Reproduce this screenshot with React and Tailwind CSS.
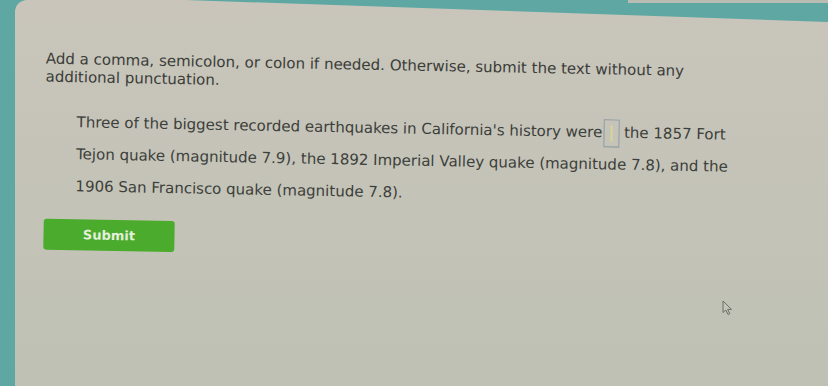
export default function App() {
  return (
    <div className="relative h-[386px] w-[828px] overflow-hidden bg-[#5ea7a3]">
      <div className="absolute right-0 top-0 h-[3px] w-[200px] bg-[#b9bcb0]" />
      <div
        className="ml-[15px] h-[386px] rounded-tl-[12px] bg-gradient-to-b from-[#c9c5bb] to-[#bfc1b5] [clip-path:polygon(0_0,170px_0,100%_22px,100%_100%,0_100%)]"
        style={{ fontFamily: '"DejaVu Sans", Verdana, sans-serif' }}
      >
        <div className="origin-top-left rotate-[1.1deg]">
          <div className="w-[700px] pl-[32px] pt-[49px] text-[15px] leading-[18px] text-[#3a3d38]">
            Add a comma, semicolon, or colon if needed. Otherwise, submit the text without any additional punctuation.
          </div>
          <div className="mt-[20px] w-[743px] pl-[64px] text-[15px] leading-[32px] text-[#3c3f3a]">
            Three of the biggest recorded earthquakes in California's history were
            <span className="ml-px inline-flex h-[28px] w-[16px] items-center justify-center border border-[#8e9ca2] align-middle">
              <span className="h-[16px] w-[2px] bg-[#d7d59a]" />
            </span>{" "}
            the 1857 Fort Tejon quake (magnitude 7.9), the 1892 Imperial Valley quake (magnitude 7.8), and the 1906 San Francisco quake (magnitude 7.8).
          </div>
          <div className="mt-[17px] flex pl-[33px]">
            <button className="h-[31px] w-[131px] rounded-[3px] bg-[#4aab2d] text-[13px] font-bold text-[#e4efdc]">
              Submit
            </button>
          </div>
        </div>
      </div>
      <div className="absolute left-[722px] top-[300px] h-[16px] w-[11px]">
        <svg width="11" height="16" viewBox="0 0 11 16">
          <path d="M1 1 L1 12.5 L3.8 10 L6 14.5 L7.8 13.7 L5.7 9.4 L9.5 9.4 Z" fill="#c2c4b8" stroke="#6a6e66" strokeWidth="1" />
        </svg>
      </div>
    </div>
  );
}
